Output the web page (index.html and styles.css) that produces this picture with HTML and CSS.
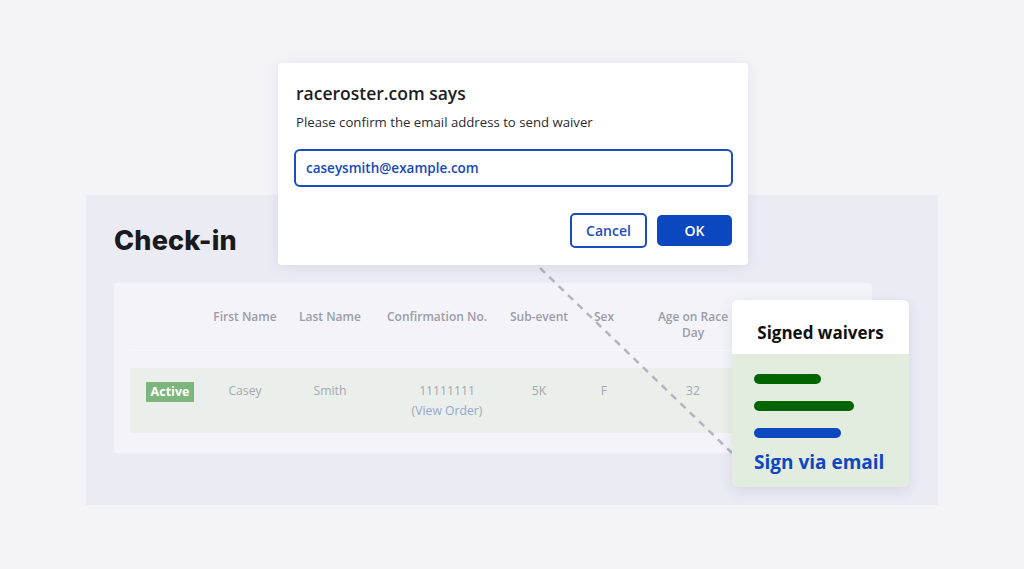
FILE: index.html
```html
<!DOCTYPE html>
<html>
<head>
<meta charset="utf-8">
<link rel="stylesheet" href="styles.css">
</head>
<body>
<div class="stage">
  <section class="panel">
    <h1 class="title">Check-in</h1>
    <div class="table-card">
      <div class="row head">
        <div class="cell"></div>
        <div class="cell">First Name</div>
        <div class="cell">Last Name</div>
        <div class="cell">Confirmation No.</div>
        <div class="cell">Sub-event</div>
        <div class="cell">Sex</div>
        <div class="cell"><span class="wrap">Age on Race Day</span></div>
      </div>
      <div class="divider"></div>
      <div class="row data">
        <div class="cell"><span class="badge">Active</span></div>
        <div class="cell">Casey</div>
        <div class="cell">Smith</div>
        <div class="cell conf">11111111<br>(<span class="link">View Order</span>)</div>
        <div class="cell">5K</div>
        <div class="cell">F</div>
        <div class="cell">32</div>
      </div>
    </div>
  </section>

  <svg class="connector" width="1024" height="569" viewBox="0 0 1024 569">
    <line x1="540" y1="268" x2="732" y2="453" stroke="#b4b4c0" stroke-width="2.5" stroke-dasharray="7 6"/>
  </svg>

  <div class="dialog">
    <div class="dlg-title">raceroster.com says</div>
    <div class="dlg-msg">Please confirm the email address to send waiver</div>
    <div class="dlg-input">caseysmith@example.com</div>
    <div class="dlg-actions">
      <button class="btn btn-outline">Cancel</button>
      <button class="btn btn-solid">OK</button>
    </div>
  </div>

  <div class="waiver">
    <div class="waiver-head">Signed waivers</div>
    <div class="waiver-body">
      <div class="bar green w1"></div>
      <div class="bar green w2"></div>
      <div class="bar blue w3"></div>
      <div class="sign">Sign via email</div>
    </div>
  </div>
</div>
</body>
</html>
```

FILE: styles.css
```css
* { box-sizing: border-box; }
html, body { margin: 0; padding: 0; }
body {
  background: #f3f3f8;
  font-family: "Open Sans", "Noto Sans", sans-serif;
  width: 1024px;
  height: 569px;
  overflow: hidden;
}
.stage {
  position: relative;
  width: 1024px;
  height: 569px;
  padding: 195px 86px 0 86px;
}
.panel {
  width: 852px;
  height: 310px;
  background: #ebebf4;
  padding: 30px 28px 0 28px;
}
.title {
  margin: 0;
  font-family: Inter, "Liberation Sans", sans-serif;
  font-weight: 800;
  font-size: 27px;
  line-height: 32px;
  color: #1a1a1e;
  letter-spacing: 0.2px;
}
.table-card {
  margin-top: 26px;
  width: 758px;
  height: 170px;
  background: #f3f3f9;
  border-radius: 3px;
  padding: 0 16px;
}
.row {
  display: grid;
  grid-template-columns: 80px 70px 100px 114px 90px 40px 138px;
  text-align: center;
}
.head {
  padding-top: 26px;
  height: 67px;
  font-weight: 600;
  font-size: 12px;
  line-height: 16px;
  color: #9c9da6;
}
.wrap {
  display: inline-block;
  max-width: 78px;
}
.divider {
  height: 1px;
  background: #f8f8fc;
}
.data {
  margin-top: 17px;
  height: 65px;
  padding-top: 13px;
  background: #eaefeb;
  font-size: 12.2px;
  line-height: 20px;
  color: #a6a7ae;
  width: 726px;
}
.data .conf { padding-left: 20px; }
.link { color: #93a8d6; }
.badge {
  display: inline-block;
  background: #7db67d;
  color: #fff;
  font-weight: 700;
  font-size: 12.5px;
  line-height: 20px;
  padding: 0 5px;
  border-radius: 1px;
  margin-top: 1px;
}

.connector {
  position: absolute;
  left: 0;
  top: 0;
}

.dialog {
  position: absolute;
  left: 278px;
  top: 63px;
  width: 470px;
  height: 202px;
  background: #fff;
  border-radius: 4px;
  box-shadow: 0 2px 14px rgba(40, 40, 90, 0.08);
  padding: 18px 15px 0 16px;
}
.dlg-title {
  font-weight: 600;
  font-size: 17.5px;
  line-height: 24px;
  color: #1d1d22;
  padding-left: 2px;
}
.dlg-msg {
  margin-top: 7px;
  font-size: 13.2px;
  line-height: 20px;
  color: #2a2a30;
  padding-left: 2px;
}
.dlg-input {
  margin-top: 17px;
  height: 38px;
  border: 2px solid #1b4dbf;
  border-radius: 6px;
  padding-left: 10px;
  font-weight: 600;
  font-size: 13.5px;
  line-height: 34px;
  color: #1848b8;
}
.dlg-actions {
  margin-top: 26px;
  display: flex;
  justify-content: flex-end;
  align-items: center;
  gap: 10px;
  padding-right: 1px;
}
.btn {
  font-family: "Open Sans", "Noto Sans", sans-serif;
  font-weight: 600;
  font-size: 14px;
  border-radius: 5px;
  padding: 0;
  cursor: pointer;
}
.btn-outline {
  width: 77px;
  height: 35px;
  background: #fff;
  border: 2px solid #1b4dbf;
  color: #1b4dbf;
}
.btn-solid {
  width: 75px;
  height: 31px;
  background: #0b47bf;
  border: none;
  color: #fff;
}

.waiver {
  position: absolute;
  left: 732px;
  top: 300px;
  width: 177px;
  height: 187px;
  border-radius: 6px;
  overflow: hidden;
  box-shadow: 0 4px 14px rgba(40, 40, 90, 0.10);
  display: flex;
  flex-direction: column;
}
.waiver-head {
  height: 54px;
  background: #fff;
  text-align: center;
  font-weight: 700;
  font-size: 17px;
  line-height: 24px;
  color: #111;
  padding-top: 21px;
}
.waiver-body {
  flex: 1;
  background: #e2eddf;
  padding: 20px 0 0 22px;
}
.bar {
  height: 10px;
  border-radius: 5px;
}
.bar + .bar { margin-top: 17px; }
.green { background: #006400; }
.blue { background: #0c48c0; }
.w1 { width: 67px; }
.w2 { width: 100px; }
.w3 { width: 87px; }
.sign {
  margin-top: 11px;
  font-weight: 700;
  font-size: 19px;
  line-height: 26px;
  color: #0c48c0;
}
```
